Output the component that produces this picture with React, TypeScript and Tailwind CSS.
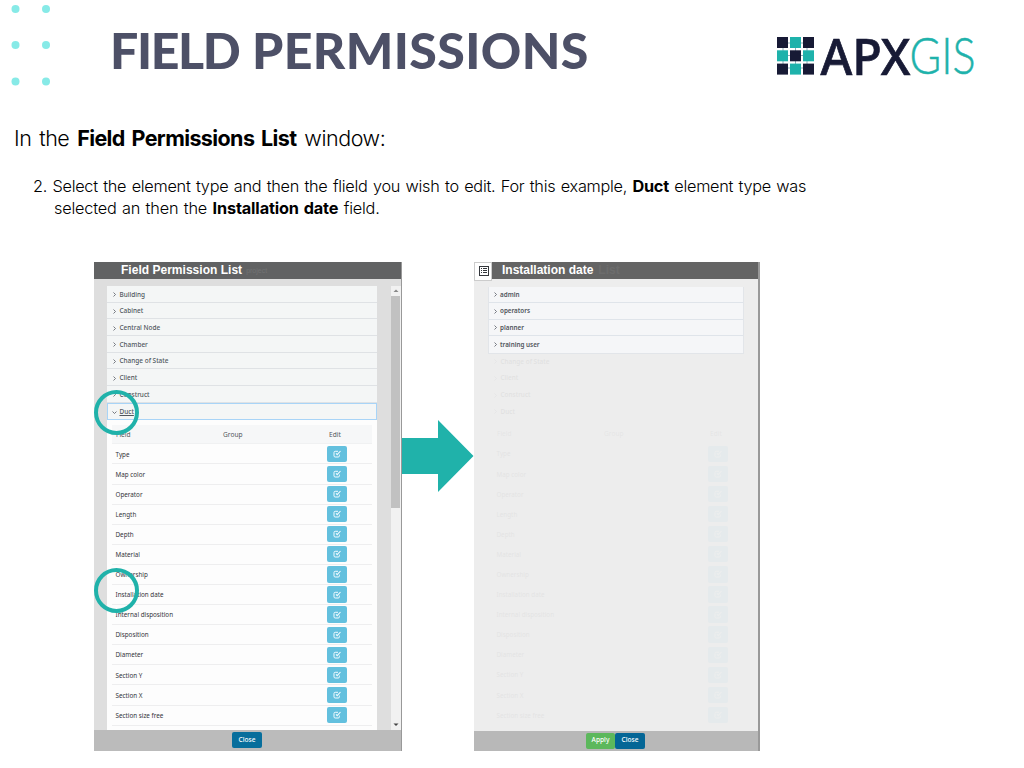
import React from "react";

const elementTypes = ["Building", "Cabinet", "Central Node", "Chamber", "Change of State", "Client", "Construct"];
const fields = [
  "Type", "Map color", "Operator", "Length", "Depth", "Material", "Ownership", "Installation date",
  "Internal disposition", "Disposition", "Diameter", "Section Y", "Section X", "Section size free",
];
const roles = ["admin", "operators", "planner", "training user"];

function Logo() {
  const navy = "#171a35";
  const teal = "#1eb2ab";
  return (
    <svg width="210" height="60" viewBox="0 -10 210 60" className="block overflow-visible">
      <path d="M7 5v34M19.500 5v34M31 5v34M2 9h35M2 21.500h35M2 34h35" stroke="#8caeb8" strokeWidth="1" />
      {[0, 1, 2].map((r) =>
        [0, 1, 2].map((c) => (
          <rect key={`${r}${c}`} x={1 + c * 13} y={3 + r * 13.3} width="11" height="11" fill={(r + c) % 2 ? teal : navy} />
        ))
      )}
      <text x="44.500" y="40.500" fontSize="51" fontWeight="500" fill={navy} stroke={navy} strokeWidth="0.700" textLength="90" lengthAdjust="spacingAndGlyphs" fontFamily="'Noto Sans', sans-serif">APX</text>
      <text x="133.500" y="40.300" fontSize="51" fontWeight="300" fill={teal} stroke={teal} strokeWidth="0.500" textLength="66" lengthAdjust="spacingAndGlyphs" fontFamily="Lato, sans-serif">GIS</text>
    </svg>
  );
}

function Chevron({ down = false }: { down?: boolean }) {
  return (
    <svg width="5" height="5" viewBox="0 0 5 5" fill="none" stroke="#555b63" strokeWidth="0.8" className="shrink-0">
      <path d={down ? "M0.500 1.500L2.500 3.500L4.500 1.500" : "M1.500 0.500L3.500 2.500L1.500 4.500"} />
    </svg>
  );
}

function EditButton() {
  return (
    <div className="flex h-[16.300px] w-5 items-center justify-center rounded-[2px] bg-[#63c0de]">
      <svg width="8" height="8" viewBox="0 0 8 8" fill="none" stroke="#f2fbff" strokeWidth="1">
        <path d="M5 1.300H2.200Q1 1.300 1 2.500V5.800Q1 7 2.200 7H5.200Q6.400 7 6.400 5.800V4.600" />
        <path d="M3 3.300L4.200 4.700L7.500 1" strokeWidth="1.100" />
      </svg>
    </div>
  );
}

function FieldTable() {
  return (
    <div className="px-[5px] pt-[5px] text-[6.300px]">
      <div className="flex h-[19px] items-center border-b border-[#f0f1f2] bg-[#f6f7f8] pt-px text-[6.600px] text-[#51565c]">
        <span className="w-[107px] pl-[4.500px]">Field</span>
        <span className="w-[106px] pl-[4.500px]">Group</span>
        <span className="pl-[4.500px]">Edit</span>
      </div>
      {fields.map((f) => (
        <div key={f} className="flex h-[20.100px] items-center border-b border-[#eeeeef] text-[#34343a]">
          <span className="w-[215px] pl-[4px] pt-[1.600px]">{f}</span>
          <EditButton />
        </div>
      ))}
    </div>
  );
}

function SourcePanel() {
  return (
    <section className="flex h-[489px] w-[308px] flex-col border-r border-[#999] bg-[#dedede]">
      <header className="flex h-[17.500px] shrink-0 items-center bg-[#616263] pl-[27px] font-['Liberation_Sans',sans-serif] text-[12px] font-bold text-white">
        <span className="tracking-[0.020px]">Field Permission List</span>
        <span className="pl-1 text-[7px] font-normal text-[#717273]">project</span>
      </header>
      <div className="flex min-h-0 flex-1 pl-[12.500px] pt-[7px]">
        <div className="w-[270px] overflow-hidden bg-[#fdfdfd]">
          {elementTypes.map((t) => (
            <div key={t} className="flex h-[16.700px] items-center gap-[3px] border-b border-[#dfe2e5] bg-[#f4f6f6] pl-[5px] pt-[2px] text-[6.450px] font-medium text-[#50565d]">
              <Chevron />
              {t}
            </div>
          ))}
          <div className="flex h-[17.500px] items-center bg-[#a8d4f7] p-px">
            <div className="flex h-full w-full items-center gap-[3px] bg-[#f4f6f6] pl-[4px] pt-px text-[6.450px] font-medium text-[#50565d]">
              <Chevron down />
              <span className="underline">Duct</span>
            </div>
          </div>
          <FieldTable />
        </div>
        <div className="ml-[14px] flex w-[10px] flex-col items-center bg-[#f1f1f1]">
          <svg width="10" height="10" viewBox="0 0 10 10"><path d="M2.500 6L5 3.500L7.500 6Z" fill="#888" /></svg>
          <div className="h-[212px] w-[8.500px] bg-[#c1c1c1]" />
          <svg width="10" height="10" viewBox="0 0 10 10" className="mt-auto"><path d="M2.500 3.500L5 6L7.500 3.500Z" fill="#444" /></svg>
        </div>
      </div>
      <footer className="flex h-[20.500px] shrink-0 items-center justify-center bg-[#bbb] pr-px text-white">
        <span className="flex h-4 w-[30px] items-center justify-center rounded-[2px] bg-[#076e9c] font-medium">Close</span>
      </footer>
    </section>
  );
}

function RolePanel() {
  return (
    <section className="flex h-[489px] w-[286px] flex-col border-r-2 border-[#999] bg-[#ededed]">
      <header className="flex h-[17.500px] shrink-0 bg-[#646464] font-['Liberation_Sans',sans-serif] text-[12px] font-bold text-white">
        <div className="flex h-[19px] w-[18px] items-center justify-center border border-[#ccc] bg-white pl-px">
          <svg width="10" height="10" viewBox="0 0 10 10" fill="none" stroke="#34373c" strokeWidth="1">
            <rect x="0.500" y="0.500" width="9" height="9" />
            <path d="M2 2.500h1M4 2.500h4M2 4.500h1M4 4.500h4M2 6.500h1M4 6.500h4" />
          </svg>
        </div>
        <span className="flex items-center pl-[10px]">Installation date</span>
        <span className="flex items-center pl-[5px] text-[#6c6c6c]">List</span>
      </header>
      <div className="min-h-0 flex-1 pl-[13.500px] pt-[7.500px]">
        <div className="w-[256px] border border-t-0 border-[#e2e5e9] bg-[#f5f6f8]">
          {roles.map((r) => (
            <div key={r} className="flex h-[16.500px] items-center gap-[2.500px] border-b border-[#dfe4ea] pl-[4px] pt-px text-[6.300px] font-semibold text-[#50555c] last:border-b-0">
              <Chevron />
              {r}
            </div>
          ))}
        </div>
        <div className="opacity-[0.050]">
          {["Change of State", "Client", "Construct", "Duct"].map((t) => (
            <div key={t} className="flex h-[16.700px] items-center gap-[3px] pl-[5px] text-[6.450px] font-medium">
              <Chevron />
              {t}
            </div>
          ))}
          <div className="w-[269px] pt-0">
            <FieldTable />
          </div>
        </div>
      </div>
      <footer className="flex h-[19.500px] shrink-0 items-center justify-center bg-[#b8b8b8] pr-px text-white">
        <span className="flex h-4 w-[29px] items-center justify-center rounded-[2px] bg-[#5cb85c] font-medium">Apply</span>
        <span className="flex h-4 w-[30px] items-center justify-center rounded-[2px] bg-[#046696] font-medium">Close</span>
      </footer>
    </section>
  );
}

export default function App() {
  return (
    <main className="relative h-[768px] w-[1024px] overflow-hidden bg-white text-black">
      <div className="flex h-[120px] items-start">
        <svg width="60" height="90" viewBox="0 0 60 90" className="shrink-0">
          {[9, 45, 81.500].map((y) => [15.500, 46].map((x) => <circle key={`${x}-${y}`} cx={x} cy={y} r="4" fill="#87eae7" />))}
        </svg>
        <h1 className="flex w-[716px] whitespace-nowrap pl-[50px] pt-[20px] font-[Lato,sans-serif] text-[50px] font-black leading-[60px] text-[#4d5067]">
          <span className="w-[142px] tracking-[-1.400px]">FIELD </span>
          <span className="tracking-[0.400px]">PERMISSIONS</span>
        </h1>
        <div className="pt-[24px]"><Logo /></div>
      </div>
      <div className="flex h-[141px] flex-col whitespace-nowrap font-[Inter,sans-serif] font-light">
        <p className="pl-[14px] pt-[4px] text-[21.500px] leading-[28px] tracking-[-0.450px] [word-spacing:2.200px]">
          In the <b className="font-bold tracking-[-0.600px]">Field Permissions List</b> window:
        </p>
        <div className="pl-[33px] pt-[23px] text-[16.300px] leading-[22px] tracking-[-0.270px] [word-spacing:1.100px]">
          <p>2. Select the element type and then the flield you wish to edit. For this example, <b className="font-bold">Duct</b> element type was</p>
          <p className="pl-[21px] tracking-[-0.200px]">selected an then the <b className="font-bold tracking-[-0.150px]">Installation date</b> field.</p>
        </div>
      </div>
      <div className="flex items-start whitespace-nowrap pl-[94px] pt-[0.500px] font-['Noto_Sans',sans-serif] text-[6.600px] leading-none">
        <SourcePanel />
        <svg width="72" height="74" viewBox="0 0 72 74" className="mt-[158px] shrink-0"><path d="M0 18H36V0L71.500 36L36 72V54H0Z" fill="#20b2aa" /></svg>
        <RolePanel />
      </div>
      <div className="absolute left-[94px] top-[390px] size-[45px] rounded-full border-4 border-[#20b2aa]" />
      <div className="absolute left-[94px] top-[568px] size-[45px] rounded-full border-4 border-[#20b2aa]" />
    </main>
  );
}
